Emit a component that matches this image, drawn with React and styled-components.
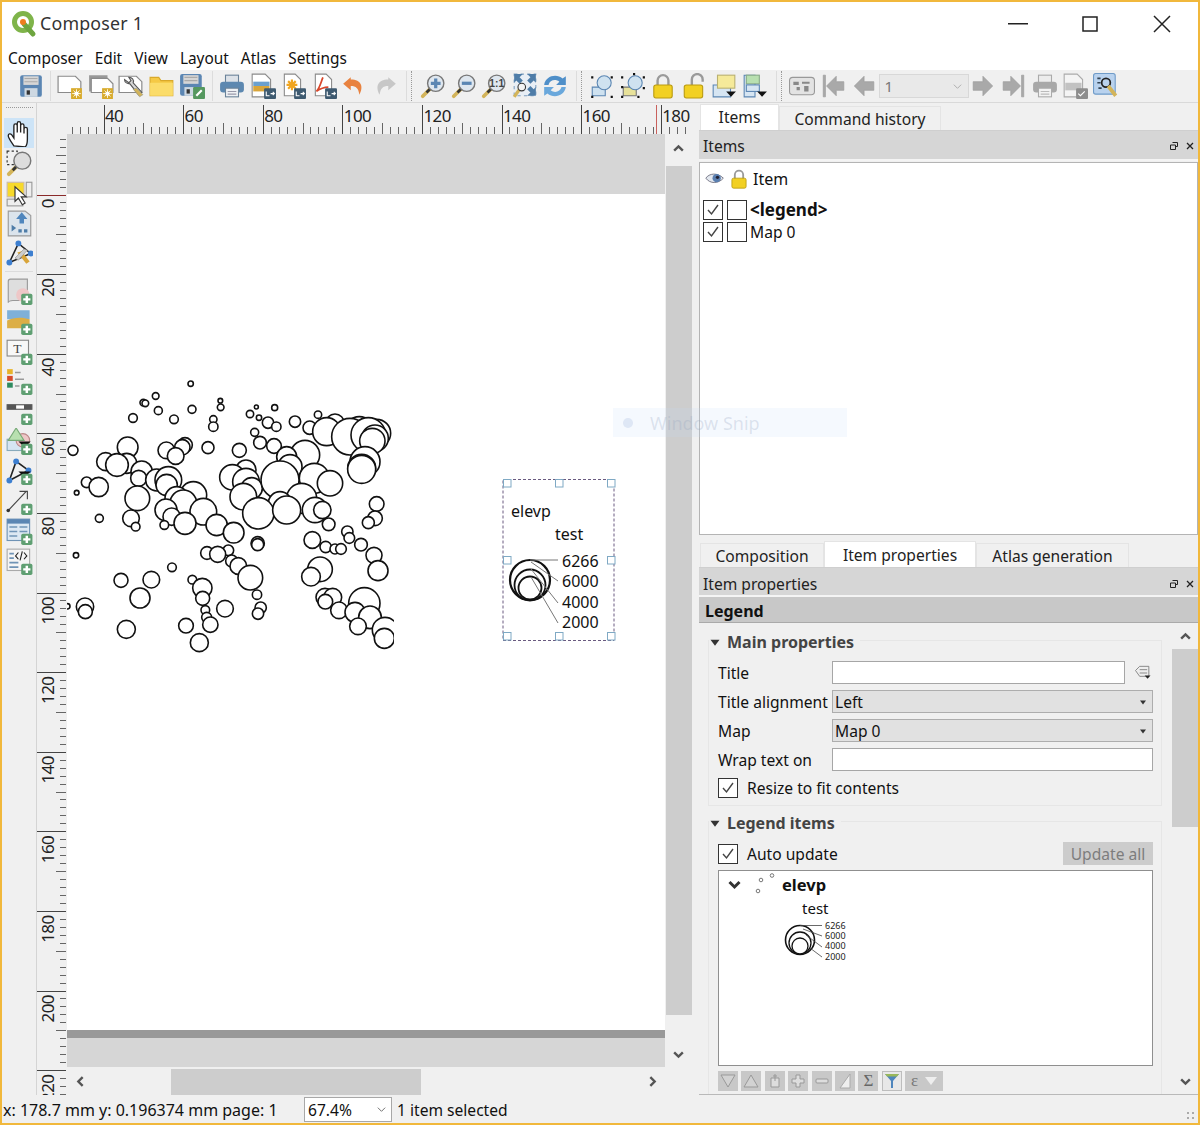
import React from "react";
import styled, { createGlobalStyle } from "styled-components";

const GlobalStyle = createGlobalStyle`
  html, body { margin: 0; padding: 0; background: #fff; }
  body { font-family: "Noto Sans", "Open Sans", sans-serif; font-size: 15.6px; color: #111; }
  * { box-sizing: border-box; }
`;

/* ---- map data, in 3x crop coordinates ---- */
const circlesTop = [
  [392,41,8],[287,78,10],[250,98,10],[256,100,10],[295,122,12],[396,118,12],[219,144,13],[342,148,13],[481,92,7],[482,112,10],
  [460,148,11],[460,170,14],[589,111,6],[644,113,9],[570,132,11],[597,143,8],[624,158,17],[649,170,14],[705,155,17],[774,134,11],
  [584,187,12],[600,218,19],[642,228,22],[749,173,20],[825,160,28],[800,185,42],[898,185,45],[950,190,42],[870,200,55],[925,195,52],
  [945,205,40],[937,213,38],[915,275,45],[905,295,42],[905,298,42],[39,241,15],[203,232,31],[200,280,30],[137,275,27],[171,285,34],
  [245,305,32],[236,325,24],[375,225,22],[367,232,23],[319,241,25],[347,258,25],[444,233,18],[538,241,21],[80,337,16],[116,351,29],
  [50,368,7],[290,330,33],[325,330,40],[320,345,32],[232,385,37],[400,375,40],[350,385,35],[370,400,40],[430,425,40],[318,420,33],
  [558,300,30],[517,322,38],[558,335,40],[575,355,32],[550,380,40],[735,255,44],[680,260,30],[690,290,36],[763,325,45],[660,330,57],
  [810,340,38],[725,385,45],[660,400,35],[950,402,22],
];
const circlesBottom = [
  [118,25,12],[213,25,25],[227,50,13],[335,20,26],[313,45,13],[375,40,33],[470,45,32],[521,68,31],[595,10,47],[680,0,42],[765,0,38],
  [787,0,26],[806,43,19],[945,25,22],[925,38,18],[593,100,20],[593,104,18],[862,65,17],[868,84,16],[757,90,25],[797,111,17],[825,117,15],
  [843,117,16],[903,104,19],[942,136,24],[954,182,30],[780,178,37],[753,200,28],[441,129,19],[505,121,16],[473,133,24],[515,153,18],
  [535,168,25],[571,203,37],[591,254,14],[48,136,8],[336,172,13],[183,211,21],[274,209,25],[240,264,30],[397,209,13],[427,234,29],
  [428,265,21],[436,300,13],[440,322,15],[451,344,23],[495,296,25],[602,293,17],[594,311,17],[75,290,26],[76,305,21],[22,289,8],
  [199,358,27],[378,347,22],[418,398,27],[795,262,27],[818,262,27],[796,275,22],[913,280,47],[837,301,25],[885,307,30],[930,322,34],
  [894,349,25],[975,360,38],[973,385,30],
];

/* ---- layout ---- */
const Window = styled.div`
  position: relative; width: 1200px; height: 1125px; overflow: hidden;
  border: 2px solid #f1b83c; display: flex; flex-direction: column; background: #f0f0f0;
`;
const TitleBar = styled.div`display: flex; align-items: center; height: 44px; background: #fff; padding-left: 8px;`;
const Title = styled.div`font-size: 17.8px; color: #333; margin: -2px 0 0 2px; letter-spacing: .2px; flex: 1;`;
const WinButton = styled.div`width: 72px; height: 44px; display: flex; align-items: center; justify-content: center;`;
const MenuBar = styled.div`display: flex; gap: 12px; height: 24px; align-items: center; background: #fff; padding-left: 6px;`;
const MenuItem = styled.span`font-size: 15.4px; color: #111;`;
const MainToolbar = styled.div`display: flex; align-items: center; height: 33px; padding-left: 14px; border-bottom: 1px solid #d9d9d9; position: relative;`;
const ToolBtn = styled.div`width: 30.5px; height: 30px; flex: none; display: flex; align-items: center; justify-content: center;`;
const ToolSep = styled.div`
  flex: none; width: ${(p) => p.$w}px; height: 30px; display: flex; justify-content: center; gap: 4px;
  &::before { content: ""; width: 1px; background: #dcdcdc; }
  ${(p) => p.$handle && `&::after { content: ""; width: 0; border-left: 1px dotted #999; }`}
`;
const PageCombo = styled.div`
  width: 90px; height: 24px; flex: none; background: #e9e9e9; border: 1px solid #d8d8d8; display: flex; align-items: center;
  justify-content: space-between; padding: 0 5px; color: #777; font-size: 15px;
`;
const Body = styled.div`display: flex; height: 992px;`;
const LeftPane = styled.div`display: flex; width: 697px; flex: none;`;
const ToolColumn = styled.div`width: 35px; flex: none; display: flex; flex-direction: column; align-items: center; padding-top: 15px; position: relative; border-right: 1px solid #d4d4d4; height: 992px;
  &::before { content: ""; position: absolute; top: 4px; left: 4px; width: 27px; border-top: 1px dotted #999; }
`;
const SideBtn = styled.div`
  width: 30px; height: 30px; flex: none; display: flex; align-items: center; justify-content: center;
  background: ${(p) => (p.$active ? "#cde4f7" : "transparent")};
`;
const SideSep = styled.div`width: 28px; height: 4px; flex: none; border-bottom: 1px solid #dcdcdc; margin-bottom: 4px;`;
const CanvasGrid = styled.div`display: grid; grid-template-columns: 30px 598px 34px; grid-template-rows: 31px 933px 28px; width: 662px;`;
const HRulerCell = styled.div`grid-column: 2 / 4; grid-row: 1; overflow: hidden; display: flex;`;
const VRulerCell = styled.div`grid-column: 1; grid-row: 2 / 4; overflow: hidden; display: flex;`;
const CanvasView = styled.div`grid-column: 2; grid-row: 2; background: #d6d6d6; padding-top: 60px; overflow: hidden;`;
const Page = styled.div`height: 844px; background: #fff; border-bottom: 8px solid #999; display: flex;`;
const VScroll = styled.div`grid-column: 3; grid-row: 2; display: flex; flex-direction: column; align-items: center; position: relative; width: 34px;`;
const VScrollThumb = styled.div`width: 26px; height: 849px; background: #cdcdcd; margin: 0 7px 0 0; flex: none;`;
const ScrollArrow = styled.div`
  height: ${(p) => p.$h}px; flex: none; display: flex; align-items: center; justify-content: center;
  padding-right: ${(p) => p.$pr || 0}px; padding-top: ${(p) => p.$pt || 0}px; padding-bottom: ${(p) => p.$pb || 0}px;
`;
const HScroll = styled.div`grid-column: 2 / 4; grid-row: 3; display: flex; align-items: center; position: relative; padding-top: 1px;`;
const HArrow = styled.div`flex: none; width: ${(p) => p.$w}px; display: flex; justify-content: center;`;
const HScrollThumb = styled.div`width: 250px; height: 26px; margin-left: 78px; background: #cdcdcd; flex: none;`;
const Spacer = styled.div`flex: 1;`;

const RightPane = styled.div`width: 499px; flex: none; display: flex; flex-direction: column;`;
const TabBar = styled.div`display: flex; align-items: flex-end; height: ${(p) => p.$h}px; padding-left: ${(p) => p.$pl}px; margin-top: ${(p) => p.$mt || 0}px; border-bottom: 1px solid #cfcfcf;`;
const Tab = styled.div`
  width: ${(p) => p.$w}px; height: ${(p) => (p.$active ? 26 : 24)}px; flex: none; display: flex; align-items: center; justify-content: center;
  background: ${(p) => (p.$active ? "#fff" : "#f0f0f0")}; color: #222; padding-top: ${(p) => (p.$active ? 0 : 1)}px;
  border: 1px solid #e4e4e4; border-bottom: 0;
`;
const DockHeader = styled.div`
  height: ${(p) => p.$h}px; flex: none; display: flex; align-items: center; justify-content: space-between; padding: ${(p) => p.$pt}px 4px 0 4px; background: #d6d6d6;
  border-bottom: 2px solid #f4f4f4; color: #222;
`;
const DockButtons = styled.div`display: flex; gap: 8px; align-items: center;`;
const TreeBox = styled.div`height: 375px; margin-top: 1px; background: #fff; border: 1px solid #b4b4b4; padding: 0 3px;`;
const TreeHead = styled.div`display: flex; align-items: center; height: 33px;`;
const HeadCell = styled.div`width: ${(p) => p.$w}px; flex: none; display: flex; justify-content: center;`;
const HeadText = styled.span`margin-left: 2px; font-size: 16px;`;
const TreeRow = styled.div`display: flex; align-items: center; height: 22px; gap: 3.5px; font-weight: ${(p) => (p.$bold ? 700 : 400)}; font-size: ${(p) => (p.$bold ? 17 : 15.6)}px; margin-top: ${(p) => p.$mt || 0}px;`;
const Check = styled.div`width: 20px; height: 20px; flex: none; border: 1.5px solid #333; display: flex; align-items: center; justify-content: center; background: #fff;`;
const LegendBar = styled.div`height: 26px; flex: none; display: flex; align-items: center; padding: 3px 0 0 6px; background: #c8c8c8; font-weight: 700; font-size: 16px; color: #111; border-bottom: 1px solid #aaa;`;
const PropsScroll = styled.div`display: flex; height: 472px; flex: none; border-bottom: 1px solid #b9b9b9;`;
const PropsContent = styled.div`width: 473px; flex: none; padding: 17px 10px 0 9px;`;
const PropsBar = styled.div`width: 26px; flex: none; display: flex; flex-direction: column; align-items: center;`;
const PropsThumb = styled.div`width: 26px; height: 178px; background: #cdcdcd; flex: none;`;
const GroupBox = styled.div`border: 1px solid #e6e6e6; height: ${(p) => p.$h}px; margin-bottom: ${(p) => p.$mb || 0}px; padding: 0 8px 0 9px; border-bottom-width: ${(p) => (p.$open ? 0 : 1)}px;`;
const GroupTitle = styled.div`
  display: flex; align-items: center; gap: 6px; height: 22px; margin: -10px 0 0 -9px; width: fit-content; padding-right: 6px;
  background: #f0f0f0; font-weight: 700; font-size: 16px; color: #444;
`;
const FormRow = styled.div`display: flex; align-items: center; height: 23px; margin-top: ${(p) => p.$mt ?? 6}px;`;
const FormLabel = styled.div`width: 114px; flex: none; white-space: nowrap;`;
const TextInput = styled.div`flex: 1; height: 23px; background: #fff; border: 1px solid #a6a6a6;`;
const Combo = styled.div`
  flex: 1; height: 23px; background: #e1e1e1; border: 1px solid #adadad; display: flex; align-items: center; justify-content: space-between;
  padding: 0 5px 0 2px;
`;
const DataIcon = styled.div`width: 28px; flex: none; display: flex; justify-content: flex-end;`;
const CheckRow = styled.div`display: flex; align-items: center; gap: 9px; height: 23px; margin-top: ${(p) => p.$mt ?? 5}px;`;
const UpdateButton = styled.div`margin-left: auto; width: 90px; height: 23px; background: #cccccc; color: #7d7d7d; display: flex; align-items: center; justify-content: center;`;
const LegendTree = styled.div`height: 196px; margin-top: 5px; background: #fff; border: 1px solid #8f8f8f; padding: 3px 0 0 8px;`;
const LegendRow = styled.div`display: flex; align-items: center; height: 22px; margin-top: -1px;`;
const LegendName = styled.div`font-weight: 700; font-size: 16.5px; margin-left: 3px;`;
const LegendSub = styled.div`font-size: 15px; margin: 3px 0 0 75px; height: 20px;`;
const LegendSymbol = styled.div`margin: 5px 0 0 57px; display: flex;`;
const SmallLabels = styled.div`margin: -2px 0 0 1px; font-size: 9px; line-height: 10.2px; color: #222;`;
const SmallTools = styled.div`display: flex; gap: 3.4px; margin-top: 5px; align-items: center;`;
const SmallTool = styled.div`
  width: ${(p) => p.$w || 20}px; height: 20px; flex: none; display: flex; align-items: center; justify-content: center;
  background: ${(p) => (p.$on ? "#e8e8e8" : "#c8c8c8")}; ${(p) => p.$on && "border: 1px solid #bdbdbd;"}
`;
const SigmaGlyph = styled.span`font-size: 17px; color: #666; font-family: "Liberation Serif", serif;`;
const EpsilonGlyph = styled.span`font-size: 17px; color: #777; font-family: "Liberation Serif", serif; margin-right: 7px;`;
const StatusBar = styled.div`height: 28px; flex: none; display: flex; align-items: center; padding: 1px 0 0 1px; position: relative;`;
const Coords = styled.div`width: 301px; flex: none; white-space: nowrap; font-size: 16px;`;
const ZoomCombo = styled.div`width: 88px; height: 25px; flex: none; background: #fff; border: 1px solid #a8a8a8; display: flex; align-items: center; justify-content: space-between; padding: 0 4px 0 3px;`;
const StatusText = styled.div`margin-left: 5px;`;
const Grip = styled.div`position: absolute; right: 2px; bottom: 2px; display: flex;`;
const SnipGhost = styled.div`
  position: absolute; left: 611px; top: 406px; width: 234px; height: 29px; background: rgba(190, 215, 250, .16); display: flex; align-items: center;
  padding: 1px 0 0 10px; gap: 17px; font-size: 18px; color: rgba(150, 165, 190, .28);
  &::before { content: ""; width: 10px; height: 10px; border-radius: 50%; background: rgba(170, 190, 225, .3); }
`;

/* ---- icon helpers ---- */
const Ico = ({ s = 26, children }) => <svg width={s} height={s} viewBox="0 0 24 24" style={{ display: "block" }}>{children}</svg>;
const Plus = () => (
  <g><rect x="13.5" y="14" width="10" height="10" rx="1.5" fill="#5f9f72" /><path d="M18.5 15.8v6.4M15.3 19h6.4" stroke="#fff" strokeWidth="2.2" /></g>
);
const Mag = ({ fill = "#dfe7ef", children }) => (
  <>
    <path d="M9 15 2.5 21.5" stroke="#d3b45a" strokeWidth="3.4" strokeLinecap="round" />
    <path d="M9.5 14.5 6 18" stroke="#333" strokeWidth="2.4" />
    <circle cx="14.5" cy="9.5" r="7.5" fill={fill} stroke="#777" strokeWidth="1.3" />
    {children}
  </>
);
const Sun = () => (
  <g><rect x="13" y="14" width="10" height="10" fill="#d8ab2c" /><circle cx="18" cy="19" r="2" fill="#fff" /><path d="M18 15v8M14 19h8M15.2 16.2l5.6 5.6M20.8 16.2l-5.6 5.6" stroke="#fff" strokeWidth=".8" /></g>
);
const Doc = ({ x = 1, y = 3, w = 21, h = 15 }) => (
  <path d={`M${x} ${y}h${w - 5}l5 5v${h - 5}h-${w}z`} fill="#fff" stroke="#8a8a8a" strokeWidth="1.1" />
);
const ExportBadge = () => (
  <g><rect x="13" y="14" width="11" height="10" rx="1" fill="#3e5a70" /><path d="M15 17v4h3M19 19h3M21 17.5l1.5 1.5-1.5 1.5" stroke="#fff" fill="none" strokeWidth="1" /></g>
);
const TallDoc = ({ children }) => (
  <><path d="M4 1h10l5 5v15H4z" fill="#fff" stroke="#8a8a8a" />{children}<ExportBadge /></>
);
const Lock = ({ open }) => (
  <>
    <path d={open ? "M10 12V6a5 5 0 0 1 10 0v2" : "M7 12V7a5 5 0 0 1 10 0v5"} fill="none" stroke="#9a9a9a" strokeWidth="2.2" />
    <rect x={open ? 3 : 3.5} y="11" width="17" height="12" rx="2" fill="#f2d022" stroke="#b99a10" />
  </>
);
const Arrow = ({ d }) => <Ico><path d={d} fill="#a9a9a9" stroke="#999" strokeWidth=".6" /></Ico>;
const Chevron = ({ dir = "up", s = 13, c = "#555", w = 2.2 }) => {
  const d = { up: "M2 8 6 4l4 4", down: "M2 4l4 4 4-4", left: "M8 2 4 6l4 4", right: "M4 2l4 4-4 4" }[dir];
  return <svg width={s} height={s} viewBox="0 0 12 12" style={{ display: "block" }}><path d={d} fill="none" stroke={c} strokeWidth={w} /></svg>;
};
const Tick = () => <svg width="16" height="16" viewBox="0 0 16 16"><path d="M3 8l3.5 4L13 3" fill="none" stroke="#444" strokeWidth="1.4" /></svg>;
const Caret = ({ s = 8 }) => <svg width={s} height={s} viewBox="0 0 8 8"><path d="M1 2.5h6L4 6.5z" fill="#333" /></svg>;
const Eye = () => (
  <Ico s={20}><path d="M1 11c4-6 14-7 21 0-6 7-16 7-21 0z" fill="#e4e9f0" stroke="#667" /><circle cx="14" cy="11" r="5" fill="#5a7fb0" /><circle cx="15" cy="10" r="2" fill="#223" /></Ico>
);

const icons = {
  save: <Ico><rect x="2" y="2" width="20" height="20" rx="2" fill="#5b86b3" /><rect x="5" y="3" width="14" height="8" fill="#d6d6d6" /><path d="M6 5h12M6 8h12" stroke="#aaa" /><rect x="6" y="14" width="12" height="8" fill="#cdd8e2" /><rect x="8" y="16" width="3" height="4" fill="#333" /></Ico>,
  newComp: <Ico><Doc /><Sun /></Ico>,
  dupComp: <Ico><path d="M1 2h17v3H4v12H1z" fill="#999" /><Doc x={3} y={5} w={20} h={13} /><Sun /></Ico>,
  manager: <Ico><Doc /><path d="M6 6c0 3 3 4 5 4l8 10 3-2-8-9c1-3-1-5-4-5l2 3-2 2z" fill="#d8d8d8" stroke="#555" /><path d="M14 15l6 7 3-2-6-6z" fill="#d3b45a" stroke="#998" strokeWidth=".6" /></Ico>,
  folder: <Ico><path d="M1 4h8l2 3h11v14H1z" fill="#f5c945" stroke="#d9a92a" /><path d="M1 9h21v12H1z" fill="#fbdc6a" /></Ico>,
  saveAs: <Ico><rect x="1" y="1" width="20" height="20" rx="2" fill="#5b86b3" /><rect x="4" y="2" width="14" height="8" fill="#d6d6d6" /><path d="M5 4h12M5 7h12" stroke="#aaa" /><rect x="5" y="13" width="12" height="8" fill="#cdd8e2" /><rect x="7" y="15" width="3" height="4" fill="#333" /><rect x="13" y="13" width="11" height="11" rx="1" fill="#55985f" /><path d="M16 21l5-5" stroke="#fff" strokeWidth="2" /></Ico>,
  print: <Ico><rect x="6" y="2" width="12" height="8" fill="#dde2e8" stroke="#6a8299" /><rect x="1" y="8" width="22" height="10" rx="3" fill="#5d88b0" /><rect x="6" y="14" width="12" height="8" fill="#eef1f4" stroke="#6a8299" /><path d="M8 17h8M8 19.5h8" stroke="#99a" /></Ico>,
  image: <Ico><path d="M2 1h12l5 5v16H2z" fill="#fff" stroke="#8a8a8a" /><rect x="3" y="8" width="15" height="4" fill="#6aa0cf" /><rect x="3" y="12" width="15" height="5" fill="#d9a53a" /><ExportBadge /></Ico>,
  svg: <Ico><TallDoc><path d="M11 6v10M6 11h10M7.5 7.5l7 7M14.5 7.5l-7 7" stroke="#f0a520" strokeWidth="2" /></TallDoc></Ico>,
  pdf: <Ico><TallDoc><path d="M11 4c-2 5-3 10-6 13 4-3 7-4 11-4" fill="none" stroke="#d9472b" strokeWidth="1.6" /></TallDoc></Ico>,
  undo: <Ico><path d="M9 4 2 10l7 6v-4c5 0 7 2 8 8 4-7 2-14-8-14z" fill="#e8823f" /></Ico>,
  redo: <Ico><path d="M15 4l7 6-7 6v-4c-5 0-7 2-8 8-4-7-2-14 8-14z" fill="#c7c7c7" /></Ico>,
  zoomIn: <Ico><Mag><path d="M14.5 5v9M10 9.5h9" stroke="#5b86b3" strokeWidth="3" /></Mag></Ico>,
  zoomOut: <Ico><Mag><path d="M10 9.5h9" stroke="#5b86b3" strokeWidth="3" /></Mag></Ico>,
  zoom11: <Ico><Mag><text x="14.5" y="13" fontSize="9.5" fontWeight="700" textAnchor="middle" fill="#444" fontFamily="Liberation Sans">1:1</text></Mag></Ico>,
  zoomFull: <Ico><rect x="2" y="1" width="20" height="20" fill="#e8eef5" stroke="#7f9fc0" strokeDasharray="3 3" /><path d="M2 1h8L7 4l3 3-3 3-3-3-2 2zM22 1h-8l3 3-3 3 3 3 3-3 2 2zM22 21h-8l3-3-3-3 3-3 3 3 2-2z" fill="#4f7da8" /><path d="M7 15 2 22" stroke="#d3b45a" strokeWidth="3" /><circle cx="9" cy="13" r="3.5" fill="#f4f4f4" stroke="#333" /></Ico>,
  refresh: <Ico><path d="M2 11C3 3 13 0 19 5l3-2v8h-9l3-3c-4-3-9-1-10 3z" fill="#4f8fc9" /><path d="M22 13c-1 8-11 11-17 6l-3 2v-8h9l-3 3c4 3 9 1 10-3z" fill="#6aa8dc" /></Ico>,
  group: <Ico><path d="M3 13h12v8H3z" fill="#cfe2f0" stroke="#5b86b3" /><circle cx="14" cy="9" r="6.5" fill="#cfe2f0" stroke="#5b86b3" /><path d="M2 3h2v2H2zM20 3h2v2h-2zM2 21h2v2H2zM20 21h2v2h-2z" fill="#111" /></Ico>,
  ungroup: <Ico><path d="M3 13h12v8H3z" fill="#e8e29a" stroke="#777" /><circle cx="14" cy="9" r="6.5" fill="#cfe2f0" stroke="#5b86b3" /><path d="M1 3h2v2H1zM12 0h2v2h-2zM21 3h2v2h-2zM21 13h2v2h-2zM1 12h2v2H1zM1 21h2v2H1zM16 21h2v2h-2z" fill="#111" /></Ico>,
  lock: <Ico><Lock /></Ico>,
  unlock: <Ico><Lock open /></Ico>,
  raise: <Ico><path d="M2 11h16v11H2z" fill="#d6e5f2" stroke="#5b86b3" /><rect x="6" y="2" width="16" height="12" fill="#f5ea9a" stroke="#b9b070" /><path d="M14 17h9l-4.5 5z" fill="#111" /></Ico>,
  align: <Ico><path d="M2 2h10v20H2z" fill="#d6e5f2" stroke="#5b86b3" /><rect x="4" y="2" width="12" height="8" fill="#b8e0b0" stroke="#88aa88" /><rect x="4" y="11" width="12" height="6" fill="#d6e5f2" stroke="#5b86b3" /><path d="M14 17h9l-4.5 5z" fill="#111" /></Ico>,
  atlasMap: <Ico><rect x="0.5" y="4" width="23" height="16" rx="3" fill="#e3e3e3" stroke="#999" /><path d="M4 8h5v3H4zM12 8h7v2h-7zM7 13h3v3H7zM14 12h4v5h-4z" fill="#888" /></Ico>,
  first: <Arrow d="M3 2h2v20H3zM22 8v8h-7v5L6 12l9-9v5z" />,
  prev: <Arrow d="M22 8v8h-9v5L4 12l9-9v5z" />,
  next: <Arrow d="M2 8v8h9v5l9-9-9-9v5z" />,
  last: <Arrow d="M21 2h-2v20h2zM2 8v8h7v5l9-9-9-9v5z" />,
  printGrey: <Ico><rect x="6" y="2" width="12" height="8" fill="#ececec" stroke="#aaa" /><rect x="1" y="8" width="22" height="10" rx="3" fill="#a8a8a8" /><rect x="6" y="14" width="12" height="8" fill="#f3f3f3" stroke="#aaa" /><path d="M8 17h8M8 19.5h8" stroke="#bbb" /></Ico>,
  exportGrey: <Ico><path d="M2 1h12l5 5v16H2z" fill="#f4f4f4" stroke="#aaa" /><rect x="3" y="9" width="15" height="7" fill="#c2c2c2" /><rect x="13" y="14" width="11" height="10" rx="1" fill="#8d8d8d" /><path d="M15 19l2 2 4-4" stroke="#fff" fill="none" /></Ico>,
  atlasSettings: <Ico><rect x="0.5" y="0.5" width="20" height="19" rx="2" fill="#b9d2ee" stroke="#6f9bc8" /><path d="M4 5h3M4 9h3M5 14h3" stroke="#345" strokeWidth="1.5" /><circle cx="12" cy="9" r="4" fill="none" stroke="#222" strokeWidth="1.6" /><path d="M14 12l7 9" stroke="#d3b45a" strokeWidth="3.4" /></Ico>,
  hand: <Ico s={27}><path d="M7 23c-2-3-5-7-5-9 0-2 2-2 3-1l2 3V5c0-2 3-2 3 0v6-8c0-2 3-2 3 0v8-6c0-2 3-2 3 0v7-4c0-2 3-2 3 0v9c0 4-1 6-2 7z" fill="#fff" stroke="#222" strokeWidth="1.2" /></Ico>,
  zoomTool: <Ico s={27}><rect x="1" y="1" width="9" height="12" fill="none" stroke="#333" strokeDasharray="2 2" /><Mag fill="#ddd" /></Ico>,
  select: <Ico s={27}><rect x="1" y="2" width="15" height="13" fill="#f7d92a" stroke="#cba" /><rect x="18" y="2" width="5" height="13" fill="#eee" stroke="#999" /><rect x="1" y="17" width="14" height="6" fill="#eee" stroke="#999" /><path d="M8 6v13l3-3 3.500 6 2.500-1.500-3.500-5.500H18z" fill="#fff" stroke="#333" /></Ico>,
  moveContent: <Ico s={27}><path d="M2 1h15l5 4v18H2z" fill="#dbe4ec" stroke="#999" /><path d="M14 2l5 6h-3v4h-4V8H9z" fill="#4f86bd" /><path d="M5 13l4 3-4 3zM11 17h3v3h-3zM16 17h3v3h-3z" fill="#4f7da8" /></Ico>,
  nodeTool: <Ico s={27}><path d="M3 20 11 3l11 9z" fill="none" stroke="#222" strokeWidth="1.4" /><circle cx="3" cy="20" r="2.6" fill="#3d7fd0" /><circle cx="11" cy="3" r="2.6" fill="#3d7fd0" /><circle cx="22" cy="12" r="2.6" fill="#3d7fd0" /><path d="M10 11l8 10 3-2-7-9z" fill="#d9a53a" /><path d="M8 16l8-8 3 1-8 9z" fill="#ccc" stroke="#888" strokeWidth=".5" /></Ico>,
  addMap: <Ico s={27}><path d="M4 1h15v19H6c-2 0-4 1-4 2V3c0-1 1-2 2-2z" fill="#dedede" stroke="#999" /><circle cx="15" cy="15" r="6" fill="#eec7c7" /><Plus /></Ico>,
  addPic: <Ico s={27}><rect x="1" y="2" width="20" height="8" fill="#7fb0d8" /><path d="M1 11c6-3 14-3 20-1v8H1z" fill="#dcae45" /><Plus /></Ico>,
  addLabel: <Ico s={27}><rect x="1" y="2" width="19" height="14" fill="#f8f8f8" stroke="#888" /><text x="10" y="13" fontSize="12" textAnchor="middle" fill="#444" fontFamily="Liberation Serif">T</text><Plus /></Ico>,
  addLegend: <Ico s={27}><rect x="1" y="1" width="5" height="4.5" fill="#e8b32a" /><rect x="1" y="7" width="5" height="4.5" fill="#d64b2a" /><rect x="1" y="13" width="5" height="4.5" fill="#2f8a5f" /><path d="M8 4h5M8 10h8M8 16h4" stroke="#999" strokeWidth="1.5" /><Plus /></Ico>,
  addScale: <Ico s={27}><rect x="1" y="6" width="22" height="4" fill="#fff" stroke="#555" /><rect x="1" y="6" width="8" height="4" fill="#555" /><rect x="16" y="6" width="7" height="4" fill="#555" /><Plus /></Ico>,
  addShape: <Ico s={27}><rect x="1" y="10" width="16" height="10" fill="#d6e5f2" stroke="#8ab" /><circle cx="15" cy="11" r="6" fill="#eec7c7" stroke="#b88" /><path d="M9 0l7 11H2z" fill="#b8e0b0" stroke="#7a7" /><path d="M11 12h11l-5.5 5z" fill="#111" /><Plus /></Ico>,
  addNode: <Ico s={27}><path d="M3 20 9 3l11 8z" fill="none" stroke="#222" strokeWidth="1.4" /><circle cx="3" cy="20" r="2.6" fill="#3d7fd0" /><circle cx="9" cy="3" r="2.6" fill="#3d7fd0" /><circle cx="20" cy="11" r="2.6" fill="#3d7fd0" /><path d="M11 12h11l-5.5 5z" fill="#111" /><Plus /></Ico>,
  addArrow: <Ico s={27}><path d="M2 20 18 3" stroke="#444" /><path d="M12 3h7v7" fill="none" stroke="#444" /><circle cx="2" cy="20" r="1.6" fill="#333" /><Plus /></Ico>,
  addTable: <Ico s={27}><rect x="1" y="1" width="20" height="19" fill="#dce8f3" stroke="#6f93b5" /><rect x="1" y="1" width="20" height="4" fill="#5b86b3" /><path d="M3 8h7M12 8h7M3 12h7M12 12h7M3 16h7" stroke="#7095b8" strokeWidth="1.4" /><Plus /></Ico>,
  addHtml: <Ico s={27}><rect x="1" y="1" width="20" height="19" fill="#f5f5f5" stroke="#aaa" /><path d="M3 5h4M3 9h4M3 13h8M3 17h8" stroke="#6f93b5" strokeWidth="1.4" /><path d="M11 4 8.500 7l2.500 3M16 4l2.500 3-2.500 3M14.500 3l-2 8" fill="none" stroke="#222" /><Plus /></Ico>,
};

const SmallIcon = ({ children }) => <svg width="16" height="16" viewBox="0 0 16 16">{children}</svg>;
const smallTools = [
  <SmallIcon><path d="M1 2h14L8 14z" fill="#d2d2d2" stroke="#999" /></SmallIcon>,
  <SmallIcon><path d="M1 14h14L8 2z" fill="#d2d2d2" stroke="#999" /></SmallIcon>,
  <SmallIcon><path d="M4 5h8v9H4z" fill="#ddd" stroke="#999" /><path d="M8 1v7M6 3h4" stroke="#999" /></SmallIcon>,
  <SmallIcon><path d="M6 2h4v4h4v4h-4v4H6v-4H2V6h4z" fill="#ddd" stroke="#999" /></SmallIcon>,
  <SmallIcon><rect x="2" y="6" width="12" height="4" rx="1" fill="#ddd" stroke="#999" /></SmallIcon>,
  <SmallIcon><path d="M3 15 13 1v14z" fill="#eee" stroke="#aaa" /></SmallIcon>,
];

/* ---- rulers, drawn in page coordinates ---- */
const range = (from, to, step) => {
  const out = [];
  for (let v = from; v <= to; v += step) out.push(v);
  return out;
};
const HRuler = () => (
  <svg width="632" height="31" viewBox="67 103 632 31" style={{ display: "block" }}>
    {range(32, 186, 2).map((mm) => {
      const x = Math.round(103.5 + (mm - 40) * 3.98) + 0.5;
      const top = mm % 20 === 0 ? 105 : mm % 10 === 0 ? 123 : 127;
      return <line key={mm} x1={x} x2={x} y1={top} y2={134} stroke={mm % 20 === 0 ? "#444" : "#666"} />;
    })}
    <line x1="656.5" x2="656.5" y1="105" y2="134" stroke="#c9605c" />
    {range(40, 180, 20).map((mm) => (
      <text key={mm} x={105 + (mm - 40) * 3.98} y="122" fontSize="17" fill="#222" fontFamily="Noto Sans" letterSpacing="-.6">{mm}</text>
    ))}
  </svg>
);
const VRuler = () => (
  <svg width="30" height="961" viewBox="37 134 30 961" style={{ display: "block" }}>
    {range(-14, 228, 2).map((mm) => {
      const y = Math.round(194.5 + mm * 3.98) + 0.5;
      const left = mm % 20 === 0 ? 37 : mm % 10 === 0 ? 56 : 60;
      return <line key={mm} x1={left} x2={66} y1={y} y2={y} stroke={mm === 0 ? "#8a2a2a" : mm % 20 === 0 ? "#444" : "#666"} />;
    })}
    {range(0, 220, 20).map((mm) => {
      const y = 199 + mm * 3.98;
      return <text key={mm} transform={`translate(54 ${y}) rotate(-90)`} textAnchor="end" fontSize="17" fill="#222" fontFamily="Noto Sans" letterSpacing="-.6">{mm}</text>;
    })}
  </svg>
);

const Circles = ({ list, y }) => (
  <g transform={`translate(60 ${y}) scale(${1 / 3})`}>
    {list.map(([cx, cy, r], i) => (
      <circle key={i} cx={cx} cy={cy} r={r} fill="#fff" stroke="#111" strokeWidth="4.8" />
    ))}
  </g>
);

const handles = [[503,479],[555,479],[607,479],[503,556],[607,556],[503,632],[555,632],[607,632]];
const legendLines = [[530,560,558,560],[531,562,558,581],[531,569,558,603],[531,577,558,623]];
const MapDrawing = () => (
  <svg width="598" height="836" viewBox="67 194 598 836" style={{ display: "block" }}>
    <defs><clipPath id="mapclip"><rect x="67" y="194" width="327" height="836" /></clipPath></defs>
    <g clipPath="url(#mapclip)">
      <Circles list={circlesTop} y={370} />
      <Circles list={circlesBottom} y={510} />
    </g>
    <rect x="503" y="479.5" width="111" height="161" fill="none" stroke="#6a5a80" strokeDasharray="3 2" />
    <g fontFamily="Noto Sans" fontSize="16" fill="#111">
      <text x="511" y="517">elevp</text>
      <text x="555" y="540">test</text>
      <text x="562" y="567">6266</text>
      <text x="562" y="587">6000</text>
      <text x="562" y="608">4000</text>
      <text x="562" y="628">2000</text>
    </g>
    <circle cx="530" cy="580" r="20" fill="#fff" stroke="#111" strokeWidth="2.2" />
    <circle cx="530" cy="585" r="15.5" fill="#fff" stroke="#111" strokeWidth="1.8" />
    <circle cx="530" cy="588" r="11.5" fill="#fff" stroke="#111" strokeWidth="1.8" />
    {legendLines.map(([a, b, c, d], i) => <line key={i} x1={a} y1={b} x2={c} y2={d} stroke="#777" />)}
    {handles.map(([x, y], i) => <rect key={i} x={x + 0.5} y={y + 0.5} width="7.5" height="7.5" fill="#fff" stroke="#7fa9c4" />)}
  </svg>
);

const SmallSymbol = () => (
  <svg width="40" height="42" viewBox="784 924 40 42" style={{ display: "block" }}>
    <circle cx="800" cy="941" r="14.5" fill="#fff" stroke="#111" strokeWidth="1.6" />
    <circle cx="800" cy="944" r="11" fill="#fff" stroke="#111" strokeWidth="1.3" />
    <circle cx="800" cy="947" r="8" fill="#fff" stroke="#111" strokeWidth="1.3" />
    <path d="M800 926.5h22M803 930l19 7M806 936l16 12M810 949l12 9" stroke="#444" fill="none" strokeWidth=".8" />
  </svg>
);

const Tool = ({ name }) => <ToolBtn>{icons[name]}</ToolBtn>;
const Side = ({ name, active }) => <SideBtn $active={active}>{icons[name]}</SideBtn>;
const FloatClose = () => (
  <DockButtons>
    <svg width="8" height="8" viewBox="0 0 8 8"><path d="M2.5.5h5v4h-2M.5 3h5v4.5h-5z" fill="none" stroke="#222" /></svg>
    <svg width="8" height="8" viewBox="0 0 8 8"><path d="M1 1l6 6M7 1 1 7" stroke="#222" strokeWidth="1.3" /></svg>
  </DockButtons>
);

export default function App() {
  return (
    <>
      <GlobalStyle />
      <Window>
        <TitleBar>
          <svg width="28" height="28" viewBox="0 0 28 28">
            <circle cx="13" cy="12" r="8.5" fill="none" stroke="#7fb44a" strokeWidth="5" />
            <path d="M14 14l9 10" stroke="#6ea53f" strokeWidth="5" strokeLinecap="round" />
            <circle cx="13" cy="12" r="3" fill="#ee7d1e" />
          </svg>
          <Title>Composer 1</Title>
          <WinButton><svg width="20" height="2"><rect width="20" height="1.5" fill="#222" /></svg></WinButton>
          <WinButton><svg width="16" height="16"><rect x="1" y="1" width="14" height="14" fill="none" stroke="#222" strokeWidth="1.5" /></svg></WinButton>
          <WinButton><svg width="18" height="18"><path d="M1 1l16 16M17 1 1 17" stroke="#222" strokeWidth="1.5" /></svg></WinButton>
        </TitleBar>
        <MenuBar>
          {["Composer", "Edit", "View", "Layout", "Atlas", "Settings"].map((m) => <MenuItem key={m}>{m}</MenuItem>)}
        </MenuBar>
        <MainToolbar>
          <Tool name="save" />
          <ToolSep $w={8.5} />
          {["newComp", "dupComp", "manager", "folder", "saveAs"].map((n) => <Tool key={n} name={n} />)}
          <ToolSep $w={9.5} />
          {["print", "image", "svg", "pdf", "undo", "redo"].map((n) => <Tool key={n} name={n} />)}
          <ToolSep $w={18} $handle />
          {["zoomIn", "zoomOut", "zoom11", "zoomFull", "refresh"].map((n) => <Tool key={n} name={n} />)}
          <ToolSep $w={16.5} $handle />
          {["group", "ungroup", "lock", "unlock", "raise", "align"].map((n) => <Tool key={n} name={n} />)}
          <ToolSep $w={17} $handle />
          {["atlasMap", "first", "prev"].map((n) => <Tool key={n} name={n} />)}
          <PageCombo>1<Chevron dir="down" s={11} c="#aaa" w={1} /></PageCombo>
          {["next", "last", "printGrey", "exportGrey", "atlasSettings"].map((n) => <Tool key={n} name={n} />)}
        </MainToolbar>
        <Body>
          <LeftPane>
            <ToolColumn>
              <Side name="hand" active />
              {["zoomTool", "select", "moveContent", "nodeTool"].map((n) => <Side key={n} name={n} />)}
              <SideSep />
              {["addMap", "addPic", "addLabel", "addLegend", "addScale", "addShape", "addNode", "addArrow", "addTable", "addHtml"].map((n) => <Side key={n} name={n} />)}
            </ToolColumn>
            <CanvasGrid>
              <HRulerCell><HRuler /></HRulerCell>
              <VRulerCell><VRuler /></VRulerCell>
              <CanvasView><Page><MapDrawing /></Page></CanvasView>
              <VScroll>
                <ScrollArrow $h={32} $pr={7} $pb={4}><Chevron /></ScrollArrow>
                <VScrollThumb />
                <ScrollArrow $h={52} $pr={7} $pt={26}><Chevron dir="down" /></ScrollArrow>
              </VScroll>
              <HScroll>
                <HArrow $w={26}><Chevron dir="left" /></HArrow>
                <HScrollThumb />
                <Spacer />
                <HArrow $w={94}><Chevron dir="right" /></HArrow>
              </HScroll>
            </CanvasGrid>
          </LeftPane>
          <RightPane>
            <TabBar $h={28} $pl={1}>
              <Tab $active $w={79}>Items</Tab>
              <Tab $w={162}>Command history</Tab>
            </TabBar>
            <DockHeader $h={30} $pt={3}>Items<FloatClose /></DockHeader>
            <TreeBox>
              <TreeHead>
                <HeadCell $w={24}><Eye /></HeadCell>
                <HeadCell $w={24}><Ico s={20}><Lock /></Ico></HeadCell>
                <HeadText>Item</HeadText>
              </TreeHead>
              <TreeRow $bold $mt={3}><Check><Tick /></Check><Check />&lt;legend&gt;</TreeRow>
              <TreeRow><Check><Tick /></Check><Check />Map 0</TreeRow>
            </TreeBox>
            <TabBar $h={27} $pl={1} $mt={6}>
              <Tab $w={124}>Composition</Tab>
              <Tab $active $w={152}>Item properties</Tab>
              <Tab $w={153}>Atlas generation</Tab>
            </TabBar>
            <DockHeader $h={29} $pt={4}>Item properties<FloatClose /></DockHeader>
            <LegendBar>Legend</LegendBar>
            <PropsScroll>
              <PropsContent>
                <GroupBox $h={166} $mb={15}>
                  <GroupTitle><Caret s={12} />Main properties</GroupTitle>
                  <FormRow $mt={8}><FormLabel>Title</FormLabel><TextInput /><DataIcon>
                    <Ico s={20}><path d="M3 9 8 4h11v12H8z" fill="#eee" stroke="#777" /><path d="M8 8h9M8 12h9" stroke="#777" /><path d="M14 15h7l-3.5 4z" fill="#222" /></Ico>
                  </DataIcon></FormRow>
                  <FormRow><FormLabel>Title alignment</FormLabel><Combo>Left<Caret /></Combo></FormRow>
                  <FormRow><FormLabel>Map</FormLabel><Combo>Map 0<Caret /></Combo></FormRow>
                  <FormRow><FormLabel>Wrap text on</FormLabel><TextInput /></FormRow>
                  <CheckRow $mt={5}><Check><Tick /></Check>Resize to fit contents</CheckRow>
                </GroupBox>
                <GroupBox $h={273} $open>
                  <GroupTitle><Caret s={12} />Legend items</GroupTitle>
                  <CheckRow $mt={8}><Check><Tick /></Check>Auto update<UpdateButton>Update all</UpdateButton></CheckRow>
                  <LegendTree>
                    <LegendRow>
                      <Chevron dir="down" s={15} c="#333" w={2.4} />
                      <svg width="26" height="22" viewBox="0 0 26 22" style={{ marginLeft: 11 }}>
                        <circle cx="8" cy="7" r="1.8" fill="none" stroke="#777" />
                        <circle cx="19" cy="2.5" r="1.8" fill="none" stroke="#777" />
                        <circle cx="5" cy="18" r="1.8" fill="none" stroke="#777" />
                      </svg>
                      <LegendName>elevp</LegendName>
                    </LegendRow>
                    <LegendSub>test</LegendSub>
                    <LegendSymbol>
                      <SmallSymbol />
                      <SmallLabels>6266<br />6000<br />4000<br />2000</SmallLabels>
                    </LegendSymbol>
                  </LegendTree>
                  <SmallTools>
                    {smallTools.map((t, i) => <SmallTool key={i}>{t}</SmallTool>)}
                    <SmallTool><SigmaGlyph>Σ</SigmaGlyph></SmallTool>
                    <SmallTool $on><SmallIcon><path d="M1 1h14L9 8v7H7V8z" fill="#4f86bd" /><path d="M1 1h14l-2 2.5H3z" fill="#9ab85a" /></SmallIcon></SmallTool>
                    <SmallTool $w={38}><EpsilonGlyph>ε</EpsilonGlyph><svg width="12" height="8" viewBox="0 0 12 8"><path d="M0 0h12L6 8z" fill="#eee" /></svg></SmallTool>
                  </SmallTools>
                </GroupBox>
              </PropsContent>
              <PropsBar>
                <ScrollArrow $h={26} $pt={1}><Chevron /></ScrollArrow>
                <PropsThumb />
                <Spacer />
                <ScrollArrow $h={26}><Chevron dir="down" /></ScrollArrow>
              </PropsBar>
            </PropsScroll>
          </RightPane>
        </Body>
        <StatusBar>
          <Coords>x: 178.7 mm y: 0.196374 mm page: 1</Coords>
          <ZoomCombo>67.4%<Chevron dir="down" s={11} c="#666" w={1} /></ZoomCombo>
          <StatusText>1 item selected</StatusText>
          <Grip>
            <svg width="10" height="10"><path d="M1 1h2v2H1zM6 1h2v2H6zM1 6h2v2H1zM6 6h2v2H6z" fill="#aaa" /></svg>
          </Grip>
        </StatusBar>
        <SnipGhost>Window Snip</SnipGhost>
      </Window>
    </>
  );
}
